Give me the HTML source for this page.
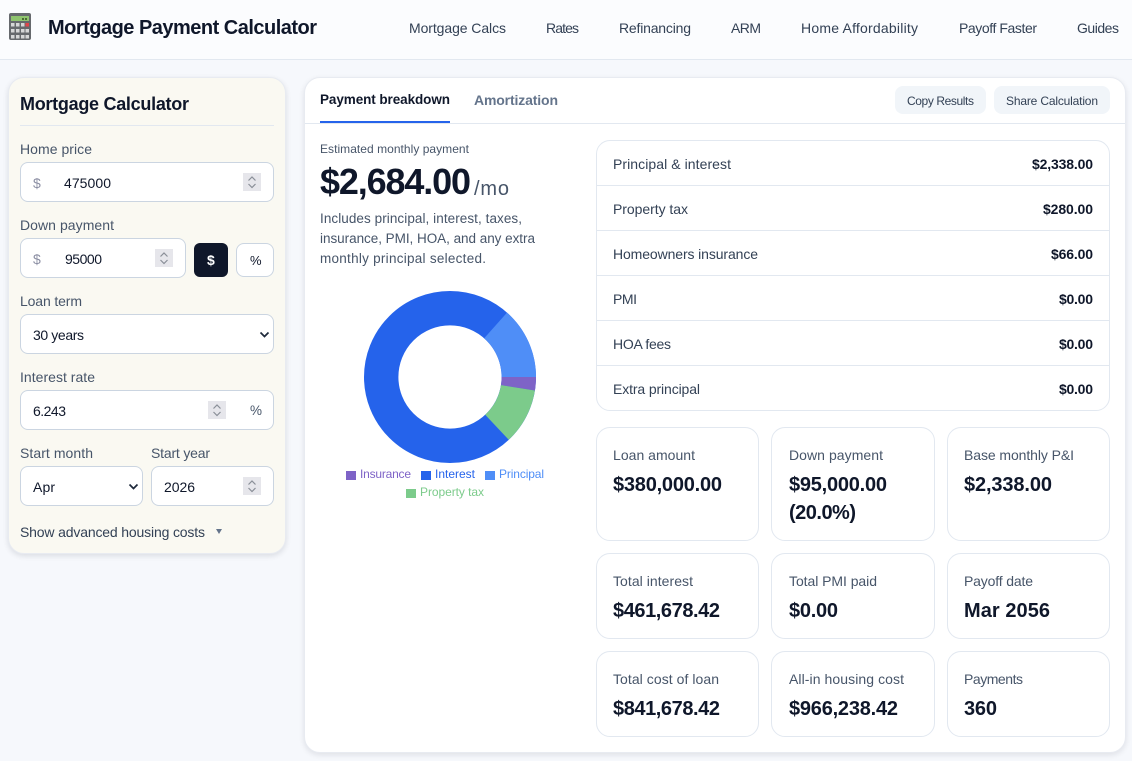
<!DOCTYPE html>
<html lang="en"><head><meta charset="utf-8"><title>Mortgage Payment Calculator</title>
<style>
*{box-sizing:border-box}
html,body{margin:0;width:1132px;height:761px;overflow:hidden;background:#f6f8fc;font-family:"Liberation Sans",sans-serif;color:#0f172a}
.a{position:absolute}
.t{position:absolute;line-height:20px;white-space:nowrap;font-size:14px}
.l{color:#475569}
.d{color:#334155}
.b{font-weight:700}
.box{position:absolute;background:#fff;border:1px solid #cbd5e1;border-radius:8px}
.card{position:absolute;background:#fff;border:1px solid #e2e8f0;border-radius:14px}
.line{position:absolute;height:1px;background:#e2e8f0}
.v{font-size:20px;font-weight:700;line-height:24px}
.sp{position:absolute;width:18px;height:18px;background:#e6e6eb}
.sq{position:absolute;width:10px;height:9px}
.g{font-size:12px}
</style></head><body>
<header class="a" style="left:0;top:0;width:1132px;height:60px;background:#fbfcfe;border-bottom:1px solid #e2e8f0"></header>
<svg class="a" style="left:9px;top:13px" width="22" height="27" viewBox="0 0 22 27">
<rect width="22" height="27" rx="2" fill="#66696d"/>
<rect x="2" y="3" width="18" height="5" fill="#8fc46f"/><rect x="13" y="5" width="2" height="2" fill="#4a6a32"/><rect x="16" y="5" width="2" height="2" fill="#4a6a32"/>
<g fill="#d6d7d8"><rect x="2" y="10" width="3.500" height="3.500"/><rect x="7" y="10" width="3.500" height="3.500"/><rect x="12" y="10" width="3.500" height="3.500"/><rect x="2" y="16" width="3.500" height="3.500"/><rect x="7" y="16" width="3.500" height="3.500"/><rect x="12" y="16" width="3.500" height="3.500"/><rect x="16.500" y="16" width="3.500" height="3.500"/><rect x="2" y="22" width="3.500" height="3.500"/><rect x="7" y="22" width="3.500" height="3.500"/><rect x="12" y="22" width="3.500" height="3.500"/><rect x="16.500" y="22" width="3.500" height="3.500"/></g>
<rect x="16.500" y="10" width="3.500" height="3.500" fill="#e0454a"/>
</svg>
<h1 class="t b" style="margin:0;left:48px;top:18px;font-size:20px;--w:269">Mortgage Payment Calculator</h1>
<nav>
<span class="t d" style="left:409px;top:18px;--w:97">Mortgage Calcs</span>
<span class="t d" style="left:546px;top:18px;--w:33">Rates</span>
<span class="t d" style="left:619px;top:18px;--w:72">Refinancing</span>
<span class="t d" style="left:731px;top:18px;--w:30">ARM</span>
<span class="t d" style="left:801px;top:18px;--w:117">Home Affordability</span>
<span class="t d" style="left:959px;top:18px;--w:78">Payoff Faster</span>
<span class="t d" style="left:1077px;top:18px;--w:42">Guides</span>
</nav>

<section class="a" style="left:8px;top:77px;width:278px;height:477px;background:#faf9f2;border:1px solid #e8ebf1;border-radius:16px;box-shadow:0 2px 6px rgba(15,23,42,.12)"></section>
<h2 class="t b" style="margin:0;left:20px;top:94px;font-size:18px;--w:169">Mortgage Calculator</h2>
<div class="line" style="left:20px;top:125px;width:254px"></div>

<span class="t l" style="left:20px;top:139px;--w:72">Home price</span>
<div class="box" style="left:20px;top:162px;width:254px;height:40px"></div>
<span class="t" style="left:33px;top:173px;color:#8b8ea3">$</span>
<span class="t" style="left:64px;top:173px;--w:47">475000</span>
<div class="sp" style="left:243px;top:173px"><svg width="18" height="18" fill="none" stroke="#8a8f98" stroke-width="1.2"><path d="M5.500 7.500 9 4l3.500 3.500M5.500 11 9 14.500 12.500 11"/></svg></div>

<span class="t l" style="left:20px;top:215px;--w:94">Down payment</span>
<div class="box" style="left:20px;top:238px;width:166px;height:40px"></div>
<span class="t" style="left:33px;top:249px;color:#8b8ea3">$</span>
<span class="t" style="left:65px;top:249px;--w:37">95000</span>
<div class="sp" style="left:155px;top:249px"><svg width="18" height="18" fill="none" stroke="#8a8f98" stroke-width="1.2"><path d="M5.500 7.500 9 4l3.500 3.500M5.500 11 9 14.500 12.500 11"/></svg></div>
<div class="a" style="left:194px;top:243px;width:34px;height:34px;background:#0f172a;border-radius:6px"></div>
<span class="t b" style="left:207px;top:250px;color:#fff">$</span>
<div class="box" style="left:236px;top:243px;width:38px;height:34px"></div>
<span class="t" style="left:250px;top:251px;font-size:13px">%</span>

<span class="t l" style="left:20px;top:291px;--w:62">Loan term</span>
<div class="box" style="left:20px;top:314px;width:254px;height:40px"></div>
<span class="t" style="left:33px;top:325px;--w:51">30 years</span>
<svg class="a" style="left:259px;top:331px" width="11" height="8" fill="none" stroke="#1e293b" stroke-width="1.700"><path d="M1.500 1.500 5.500 5.500 9.500 1.500"/></svg>

<span class="t l" style="left:20px;top:367px;--w:75">Interest rate</span>
<div class="box" style="left:20px;top:390px;width:254px;height:40px"></div>
<span class="t" style="left:33px;top:401px;--w:33">6.243</span>
<div class="sp" style="left:208px;top:401px"><svg width="18" height="18" fill="none" stroke="#8a8f98" stroke-width="1.2"><path d="M5.500 7.500 9 4l3.500 3.500M5.500 11 9 14.500 12.500 11"/></svg></div>
<span class="t l" style="left:250px;top:401px;font-size:13.500px">%</span>

<span class="t l" style="left:20px;top:443px;--w:73">Start month</span>
<span class="t l" style="left:151px;top:443px;--w:59">Start year</span>
<div class="box" style="left:20px;top:466px;width:123px;height:40px"></div>
<span class="t" style="left:33px;top:477px;--w:22">Apr</span>
<svg class="a" style="left:128px;top:483px" width="11" height="8" fill="none" stroke="#1e293b" stroke-width="1.700"><path d="M1.500 1.500 5.500 5.500 9.500 1.500"/></svg>
<div class="box" style="left:151px;top:466px;width:123px;height:40px"></div>
<span class="t" style="left:164px;top:477px;--w:31">2026</span>
<div class="sp" style="left:243px;top:477px"><svg width="18" height="18" fill="none" stroke="#8a8f98" stroke-width="1.2"><path d="M5.500 7.500 9 4l3.500 3.500M5.500 11 9 14.500 12.500 11"/></svg></div>
<span class="t d" style="left:20px;top:522px;--w:185">Show advanced housing costs</span>
<svg class="a" style="left:216px;top:529px" width="6" height="6"><path d="M0 0h6L3 5z" fill="#64748b"/></svg>

<section class="a" style="left:304px;top:77px;width:822px;height:676px;background:#fff;border:1px solid #e8ebf1;border-radius:16px;box-shadow:0 2px 6px rgba(15,23,42,.1)"></section>
<div class="line" style="left:305px;top:123px;width:820px"></div>
<span class="t b" style="left:320px;top:90px;font-size:13.500px;--w:130">Payment breakdown</span>
<div class="a" style="left:320px;top:121px;width:130px;height:2px;background:#2563eb"></div>
<span class="t b" style="left:474px;top:90px;font-size:14px;color:#64748b;--w:84">Amortization</span>
<div class="a" style="left:895px;top:86px;width:91px;height:28px;background:#f1f5f9;border-radius:8px"></div>
<span class="t d g" style="left:907px;top:91px;--w:67">Copy Results</span>
<div class="a" style="left:994px;top:86px;width:116px;height:28px;background:#f1f5f9;border-radius:8px"></div>
<span class="t d g" style="left:1006px;top:91px;--w:92">Share Calculation</span>

<span class="t l g" style="left:320px;top:139px;--w:149">Estimated monthly payment</span>
<span class="t b" style="left:320px;top:172px;font-size:36px;--w:151">$2,684.00</span>
<span class="t l" style="left:474px;top:179px;font-size:20px;--w:35">/mo</span>
<span class="t l" style="left:320px;top:209px;font-size:13.500px;--w:202">Includes principal, interest, taxes,</span>
<span class="t l" style="left:320px;top:229px;font-size:13.500px;--w:215">insurance, PMI, HOA, and any extra</span>
<span class="t l" style="left:320px;top:249px;font-size:13.500px;--w:166">monthly principal selected.</span>

<svg class="a" style="left:350px;top:277px" width="200" height="200" viewBox="-100 -100 200 200">
<circle r="68.800" fill="none" stroke="#2563eb" stroke-width="34.400"/>
<path d="M86 0A86 86 0 0 0 57 -64.400L34.200 -38.700A51.600 51.600 0 0 1 51.600 0Z" fill="#4f8ef7"/>
<path d="M86 0A86 86 0 0 1 84.900 13.500L51 8.100A51.600 51.600 0 0 0 51.600 0Z" fill="#7e63c7"/>
<path d="M84.900 13.500A86 86 0 0 1 58.700 62.800L35.200 37.700A51.600 51.600 0 0 0 51 8.100Z" fill="#7ccb8b"/>
</svg>
<div class="sq" style="left:346px;top:471px;background:#7e63c7"></div>
<span class="t g" style="left:360px;top:464px;color:#7e63c7;--w:51">Insurance</span>
<div class="sq" style="left:421px;top:471px;background:#2563eb"></div>
<span class="t g" style="left:435px;top:464px;color:#2563eb;--w:40">Interest</span>
<div class="sq" style="left:485px;top:471px;background:#4f8ef7"></div>
<span class="t g" style="left:499px;top:464px;color:#4f8ef7;--w:45">Principal</span>
<div class="sq" style="left:406px;top:489px;background:#7ccb8b"></div>
<span class="t g" style="left:420px;top:482px;color:#7ccb8b;--w:64">Property tax</span>

<div class="card" style="left:596px;top:140px;width:514px;height:271px"></div>
<div class="line" style="left:597px;top:185px;width:512px"></div>
<div class="line" style="left:597px;top:230px;width:512px"></div>
<div class="line" style="left:597px;top:275px;width:512px"></div>
<div class="line" style="left:597px;top:320px;width:512px"></div>
<div class="line" style="left:597px;top:365px;width:512px"></div>
<span class="t d" style="left:613px;top:154px;--w:118">Principal &amp; interest</span>
<span class="t b" style="left:1032px;top:154px;--w:61">$2,338.00</span>
<span class="t d" style="left:613px;top:199px;--w:75">Property tax</span>
<span class="t b" style="left:1043px;top:199px;--w:50">$280.00</span>
<span class="t d" style="left:613px;top:244px;--w:145">Homeowners insurance</span>
<span class="t b" style="left:1051px;top:244px;--w:42">$66.00</span>
<span class="t d" style="left:613px;top:289px;--w:24">PMI</span>
<span class="t b" style="left:1059px;top:289px;--w:34">$0.00</span>
<span class="t d" style="left:613px;top:334px;--w:58">HOA fees</span>
<span class="t b" style="left:1059px;top:334px;--w:34">$0.00</span>
<span class="t d" style="left:613px;top:379px;--w:87">Extra principal</span>
<span class="t b" style="left:1059px;top:379px;--w:34">$0.00</span>

<div class="card" style="left:596px;top:427px;width:163px;height:114px"></div>
<div class="card" style="left:771px;top:427px;width:164px;height:114px"></div>
<div class="card" style="left:947px;top:427px;width:163px;height:114px"></div>
<div class="card" style="left:596px;top:553px;width:163px;height:86px"></div>
<div class="card" style="left:771px;top:553px;width:164px;height:86px"></div>
<div class="card" style="left:947px;top:553px;width:163px;height:86px"></div>
<div class="card" style="left:596px;top:651px;width:163px;height:86px"></div>
<div class="card" style="left:771px;top:651px;width:164px;height:86px"></div>
<div class="card" style="left:947px;top:651px;width:163px;height:86px"></div>

<span class="t l" style="left:613px;top:445px;--w:82">Loan amount</span>
<span class="t v" style="left:613px;top:473px;--w:109">$380,000.00</span>
<span class="t l" style="left:789px;top:445px;--w:94">Down payment</span>
<span class="t v" style="left:789px;top:473px;--w:98">$95,000.00</span>
<span class="t v" style="left:789px;top:501px;--w:67">(20.0%)</span>
<span class="t l" style="left:964px;top:445px;--w:110">Base monthly P&amp;I</span>
<span class="t v" style="left:964px;top:473px;--w:88">$2,338.00</span>

<span class="t l" style="left:613px;top:571px;--w:80">Total interest</span>
<span class="t v" style="left:613px;top:599px;--w:107">$461,678.42</span>
<span class="t l" style="left:789px;top:571px;--w:88">Total PMI paid</span>
<span class="t v" style="left:789px;top:599px;--w:49">$0.00</span>
<span class="t l" style="left:964px;top:571px;--w:69">Payoff date</span>
<span class="t v" style="left:964px;top:599px;--w:86">Mar 2056</span>

<span class="t l" style="left:613px;top:669px;--w:106">Total cost of loan</span>
<span class="t v" style="left:613px;top:697px;--w:107">$841,678.42</span>
<span class="t l" style="left:789px;top:669px;--w:115">All-in housing cost</span>
<span class="t v" style="left:789px;top:697px;--w:109">$966,238.42</span>
<span class="t l" style="left:964px;top:669px;--w:59">Payments</span>
<span class="t v" style="left:964px;top:697px;--w:33">360</span>
<script>
document.querySelectorAll('.t').forEach(function(e){
var w=parseFloat(e.style.getPropertyValue('--w'));if(!w)return;
var n=e.textContent.length;if(n<2)return;
var c=e.getBoundingClientRect().width;
e.style.letterSpacing=((w-c)/(n-1)).toFixed(3)+'px';
});
</script>
</body></html>
